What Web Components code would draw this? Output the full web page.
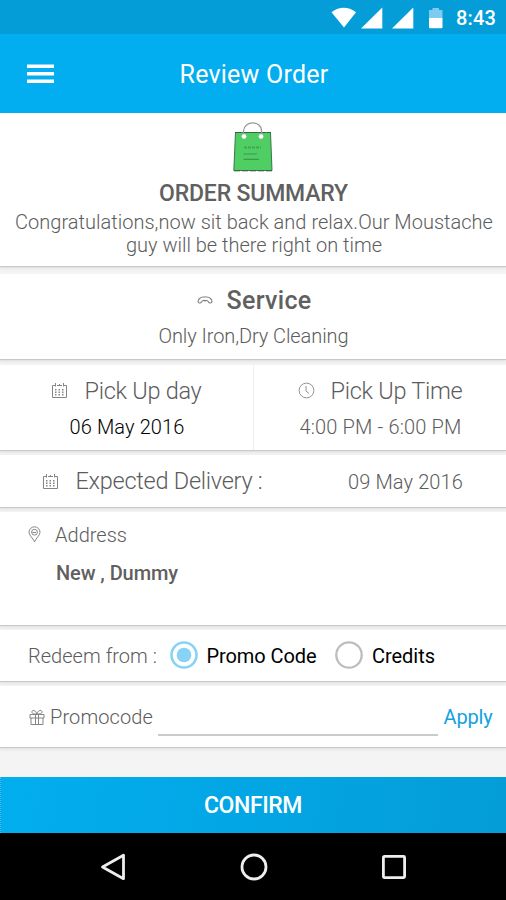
<!DOCTYPE html>
<html lang="en">
<head>
<meta charset="utf-8">
<title>Review Order</title>
<style>
html,body{margin:0;height:100%;background:#f4f4f4;font-family:Roboto,"Liberation Sans",sans-serif}
</style>
</head>
<body>
<order-screen></order-screen>
<script>
const make = (name, html, extra) => customElements.define(name, class extends HTMLElement {
  constructor() {
    super();
    this.attachShadow({mode: 'open'}).innerHTML = html;
  }
  connectedCallback() { if (extra) extra(this); }
});

/* Single-line label; "w" is its full width, reached by even tracking. */
make('fit-text', `<style>
:host{display:block;flex:none;white-space:pre;line-height:1.15;font-size:20px;font-weight:350;color:#5c5c5c}
span{display:inline-block}
</style><span><slot></slot></span>`, el => {
  const w = +el.getAttribute('w'), span = el.shadowRoot.querySelector('span');
  const natural = span.getBoundingClientRect().width;
  el.style.letterSpacing = ((w - natural) / el.textContent.length).toFixed(3) + 'px';
  el.style.width = w + 'px';
});

const icons = {
  calendar: [17, 17, '<path fill="none" stroke="#858585" d="M4 3.500H1.500V15.500H15.500V3.500H13M6 3.500H11M4.500 1V4.500M12.500 1V4.500M8.500 2V4"/><path fill="none" stroke="#858585" stroke-width="1.500" stroke-dasharray="1.500 2" d="M4 7.800H13M4 10.300H13M4 12.800H13"/>'],
  clock: [17, 17, '<g fill="none" stroke="#929292"><circle cx="8.5" cy="8.5" r="7.4"/><path d="M8 4V9L11 11.5"/></g>'],
  moustache: [16, 9, '<path fill="none" stroke="#808080" stroke-width="1.100" d="M1 5.500C1 3.500 3.500 1 6 1H10C12.500 1 15 3.500 15 5.500C15 7.500 12 7.500 11.500 6C11 4.300 9 4 8 5C7 4 5 4.300 4.500 6C4 7.500 1 7.500 1 5.500Z"/>'],
  pin: [13, 17, '<g fill="none" stroke="#858585"><path d="M6.500 15.800C5 12 1 9.500 1 6.300A5.500 5.500 0 0 1 12 6.300C12 9.500 8 12 6.500 15.800Z"/><circle cx="6.500" cy="6.200" r="2.900"/><path d="M4.500 6.500H8"/></g>'],
  gift: [16, 17, '<g fill="none" stroke="#858585"><path d="M1 5.500H15V9H1ZM2 9V15.500H14V9M6.500 5.500V15.500M9.500 5.500V15.500M7.800 5C4 5 2.500 4 3 2.500C4 .2 7 1.500 7.800 5C8.800 1.500 12 .2 13 2.500C13.500 4 12 5 7.800 5"/></g>'],
  menu: [27, 20, '<path fill="#fff" d="M0 .5h27v3.500H0zM0 8h27v3.500H0zM0 15.500h27v3.500H0z"/>'],
  wifi: [26, 21, '<path fill="#fff" d="M.5 5.200Q12.800-3.500 25 5.200L13 20.500Z"/>'],
  signal: [22, 22, '<path fill="#fff" d="M21.300.5V21.500H0Z"/>'],
  battery: [16, 22, '<path fill="#7dcbee" d="M4.500 1H11V3H14.500V11H1V3H4.500Z"/><path fill="#fff" d="M1 11H14.500V20.200Q14.500 21.200 13.500 21.200H2Q1 21.200 1 20.200Z"/>'],
  bag: [40, 50, '<path fill="#4fce63" stroke="#39764a" stroke-width="1" d="M2.500 10.500H37.500L39 48.500H.8Z"/><path stroke="#3a5f45" stroke-width="1" stroke-dasharray="6 2" fill="none" d="M2 10.500H38M1 48.800H39"/><path fill="none" stroke="#989898" stroke-width="1.200" d="M10.500 14V9C11-1.800 28.500-1.800 28.500 9V14"/><g fill="#fff" stroke="#bbb" stroke-width=".5"><circle cx="11" cy="14.500" r="2.400"/><circle cx="28" cy="14.500" r="2.400"/></g><path stroke="#3b9850" stroke-width="1.200" fill="none" d="M10.500 32H24M10.500 37.300H26"/><path stroke="#43a556" stroke-width="2.200" stroke-dasharray="3 1" fill="none" d="M11 25.500H28"/>'],
  back: [26, 30, '<path fill="none" stroke="#eee" stroke-width="2.800" stroke-linejoin="round" d="M23.500 3.300V26.700L2.500 15Z"/>'],
  home: [28, 28, '<circle fill="none" stroke="#eee" stroke-width="2.800" cx="14" cy="14" r="12"/>'],
  recent: [26, 26, '<rect fill="none" stroke="#eee" stroke-width="2.800" x="2.400" y="2.400" width="21.200" height="21.200" rx="1"/>'],
  on: [28, 28, '<circle fill="#fff" stroke="#87d3f5" stroke-width="2.600" cx="14" cy="14" r="12.500"/><circle fill="#87d3f5" cx="14" cy="14" r="7.300"/>'],
  off: [28, 28, '<circle fill="none" stroke="#bdbdbd" stroke-width="2.300" cx="14" cy="14" r="12.700"/>']
};
make('ui-icon', `<style>:host{display:block;flex:none}svg{display:block}</style><svg></svg>`, el => {
  const [w, h, body] = icons[el.getAttribute('name')], svg = el.shadowRoot.querySelector('svg');
  svg.setAttribute('width', w);
  svg.setAttribute('height', h);
  svg.setAttribute('viewBox', `0 0 ${w} ${h}`);
  svg.innerHTML = body;
});

make('status-bar', `<style>
:host{display:flex;box-sizing:border-box;height:34px;background:#049dd8;padding:7px 10px 0 0;justify-content:flex-end;align-items:flex-start}
ui-icon{margin-right:var(--g)}
fit-text{color:#fff;font-weight:500}
</style><ui-icon name="wifi" style="--g:4px"></ui-icon><ui-icon name="signal" style="--g:9px"></ui-icon><ui-icon name="signal" style="--g:14px"></ui-icon><ui-icon name="battery" style="--g:12px"></ui-icon><fit-text w="40">8:43</fit-text>`);

make('app-bar', `<style>
:host{display:flex;box-sizing:border-box;height:79px;background:#02aeef;padding:0 0 0 26.500px;align-items:center}
fit-text{color:#fff;font-size:25px;font-weight:400;margin:4px 0 0 126px}
</style><ui-icon name="menu"></ui-icon><fit-text w="149">Review Order</fit-text>`);

make('order-card', `<style>
:host{display:block;box-sizing:border-box;background:#fff;box-shadow:0 1px 1px 0 #c9c9c9,0 3px 3px #e6e6e6}
</style><slot></slot>`);

make('confirm-button', `<style>
:host{display:flex;box-sizing:border-box;height:56px;background:linear-gradient(100deg,#02aeef,#049dd8);align-items:center;padding:3px 0 0 203px;border-left:1px dotted #4cc0ef}
fit-text{font-size:23px;font-weight:500;color:#fff}
</style><fit-text w="98">CONFIRM</fit-text>`);

make('nav-bar', `<style>
:host{display:flex;height:67px;background:#000;align-items:center;padding-left:100px;box-sizing:border-box}
ui-icon+ui-icon{margin-left:113.500px}
</style><ui-icon name="back"></ui-icon><ui-icon name="home"></ui-icon><ui-icon name="recent"></ui-icon>`);

make('order-screen', `<style>
:host{display:block;width:506px;height:900px;overflow:hidden;background:#f4f4f4}
.row{display:flex;align-items:center;height:var(--h,20px)}
.big{font-size:23.500px}
.med{font-weight:500;color:#606060}
.dark{color:#000}
.reg{font-weight:400}
ui-icon,fit-text{margin-left:var(--m,0)}
.summary{height:153px;padding-top:9px;margin-bottom:8px;display:flex;flex-direction:column;align-items:center}
.service{height:85px;padding-top:13px;margin-bottom:6px}
.pick{height:85px;margin-bottom:5px}
.cols{display:grid;grid-template-columns:253px 253px;height:100%}
.cols>div{padding-top:14px}
.cols>div+div{border-left:1px solid #eee}
.delivery{height:52px;padding-top:2px;margin-bottom:5px}
.address{height:113px;padding-top:13px;margin-bottom:5px}
.redeem{height:51px;margin-bottom:5px}
.promo{height:61px;margin-bottom:30px}
.line{flex:none;width:280px;height:2px;background:#cbcbcb;margin:34px 0 0 4.500px}
.up{margin-bottom:2px}
</style>
<status-bar></status-bar>
<app-bar></app-bar>
<order-card class="summary">
  <ui-icon name="bag"></ui-icon>
  <div class="row" style="--h:22px;margin-top:11px;padding-left:1px"><fit-text class="med" w="189" style="font-size:23px">ORDER SUMMARY</fit-text></div>
  <div class="row" style="--h:23px;margin-top:6px;padding-left:2px"><fit-text w="478">Congratulations,now sit back and relax.Our Moustache</fit-text></div>
  <div class="row" style="--h:23px;padding-left:2px"><fit-text w="256">guy will be there right on time</fit-text></div>
</order-card>
<order-card class="service">
  <div class="row" style="--h:29px"><ui-icon class="up" name="moustache" style="--m:197px"></ui-icon><fit-text class="med" w="85" style="font-size:25px;--m:13.500px">Service</fit-text></div>
  <div class="row" style="margin-top:10px"><fit-text w="190" style="--m:158.500px">Only Iron,Dry Cleaning</fit-text></div>
</order-card>
<order-card class="pick"><div class="cols">
  <div>
    <div class="row" style="--h:24px"><ui-icon class="up" name="calendar" style="--m:51px"></ui-icon><fit-text class="big" w="117" style="--m:16.500px">Pick Up day</fit-text></div>
    <div class="row" style="--h:24px;margin-top:12px"><fit-text class="dark" w="115" style="--m:69.500px">06 May 2016</fit-text></div>
  </div>
  <div>
    <div class="row" style="--h:24px"><ui-icon class="up" name="clock" style="--m:44px"></ui-icon><fit-text class="big" w="132" style="--m:15.500px">Pick Up Time</fit-text></div>
    <div class="row" style="--h:24px;margin-top:12px"><fit-text w="162" style="--m:45.500px">4:00 PM - 6:00 PM</fit-text></div>
  </div>
</div></order-card>
<order-card class="delivery"><div class="row" style="--h:50px"><ui-icon class="up" name="calendar" style="--m:42px"></ui-icon><fit-text class="big" w="187" style="--m:16.500px">Expected Delivery :</fit-text><fit-text w="115" style="--m:85.500px">09 May 2016</fit-text></div></order-card>
<order-card class="address">
  <div class="row"><ui-icon class="up" name="pin" style="--m:28px"></ui-icon><fit-text w="72" style="--m:14px">Address</fit-text></div>
  <div class="row" style="margin-top:18px"><fit-text class="med" w="122" style="--m:56px">New , Dummy</fit-text></div>
</order-card>
<order-card class="redeem"><div class="row" style="--h:52px"><fit-text w="129" style="--m:28px">Redeem from :</fit-text><ui-icon class="up" name="on" style="--m:12.500px"></ui-icon><fit-text class="dark reg" w="110" style="--m:9px">Promo Code</fit-text><ui-icon class="up" name="off" style="--m:18.500px"></ui-icon><fit-text class="dark reg" w="63" style="--m:9px">Credits</fit-text></div></order-card>
<order-card class="promo"><div class="row" style="--h:63px"><ui-icon name="gift" style="--m:29px"></ui-icon><fit-text w="103" style="--m:5px">Promocode</fit-text><div class="line"></div><fit-text class="reg" w="49" style="--m:6px;color:#12a2e0">Apply</fit-text></div></order-card>
<confirm-button></confirm-button>
<nav-bar></nav-bar>`);
</script>
</body>
</html>
